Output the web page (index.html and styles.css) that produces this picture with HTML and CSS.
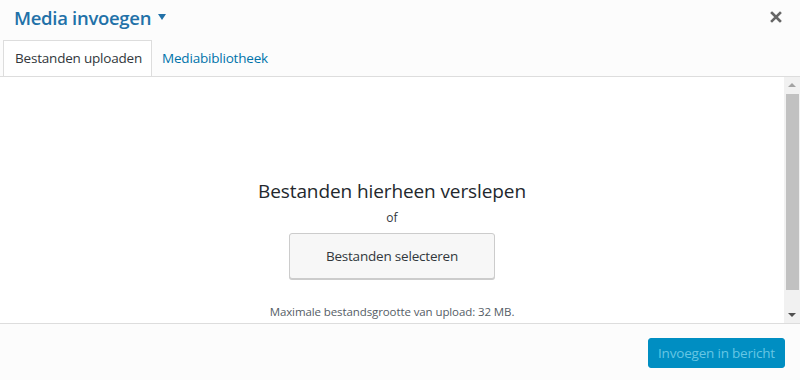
FILE: index.html
```html
<!DOCTYPE html>
<html lang="nl">
<head>
<meta charset="utf-8">
<title>Media invoegen</title>
<link rel="stylesheet" href="styles.css">
</head>
<body>
<div class="modal">
  <header class="head">
    <div class="title-row">
      <h1 class="title">Media invoegen
        <svg class="caret" width="8" height="6" viewBox="0 0 8 6"><path d="M0 0 H8 L4 6 Z" fill="#2271a8"/></svg>
      </h1>
      <button class="close" aria-label="Sluiten">
        <svg width="12" height="12" viewBox="0 0 12 12"><path d="M2 2 L10 10 M10 2 L2 10" stroke="#666" stroke-width="2.6" stroke-linecap="square"/></svg>
      </button>
    </div>
    <nav class="tabs">
      <span class="tab active">Bestanden uploaden</span>
      <span class="tab">Mediabibliotheek</span>
    </nav>
  </header>
  <main class="body">
    <section class="content">
      <div class="drop">
        <p class="drop-title">Bestanden hierheen verslepen</p>
        <p class="or">of</p>
        <button class="select">Bestanden selecteren</button>
        <p class="max">Maximale bestandsgrootte van upload: 32 MB.</p>
      </div>
    </section>
    <div class="scrollbar">
      <div class="arrow up"></div>
      <div class="thumb"></div>
      <div class="track"></div>
      <div class="arrow down"></div>
    </div>
  </main>
  <footer class="foot">
    <button class="insert">Invoegen in bericht</button>
  </footer>
</div>
</body>
</html>
```
FILE: styles.css
```css
* { box-sizing: border-box; }
html, body { margin: 0; padding: 0; }
body {
  width: 800px;
  height: 380px;
  overflow: hidden;
  font-family: "Open Sans", "Noto Sans", sans-serif;
  color: #32373c;
  background: #fff;
}
.modal {
  display: flex;
  flex-direction: column;
  height: 380px;
}
.head {
  background: #fcfcfc;
  border-bottom: 1px solid #ddd;
  height: 77px;
  display: flex;
  flex-direction: column;
}
.title-row {
  display: flex;
  justify-content: space-between;
  align-items: center;
  height: 41px;
  padding: 0 18px 0 14px;
}
.title {
  margin: 0;
  font-size: 18.5px;
  font-weight: 600;
  color: #2271a8;
  letter-spacing: -0.3px;
  line-height: 1;
  padding-bottom: 4px;
  display: flex;
  align-items: center;
}
.caret {
  margin-left: 7px;
  margin-top: -2px;
}
.close {
  border: 0;
  background: transparent;
  padding: 0;
  width: 12px;
  height: 12px;
  margin-bottom: 6px;
  display: flex;
}
.tabs {
  display: flex;
  padding-left: 3px;
  height: 36px;
}
.tab {
  font-size: 13.5px;
  color: #0073aa;
  padding: 0 10px 0 11px;
  line-height: 34px;
  border: 1px solid transparent;
  border-bottom: 0;
  letter-spacing: -0.2px;
}
.tab.active {
  color: #32373c;
  background: #fff;
  border-color: #ddd;
  height: 36px;
  padding-right: 9px;
}
.tab + .tab { padding-left: 9px; }
.body {
  flex: 1;
  display: flex;
  background: #fff;
  border-bottom: 1px solid #ddd;
}
.content {
  flex: 1;
  display: flex;
  justify-content: center;
}
.drop {
  display: flex;
  flex-direction: column;
  align-items: center;
  padding-top: 101px;
}
.drop-title {
  margin: 0;
  font-size: 19px;
  line-height: 26px;
  color: #23282d;
  letter-spacing: -0.1px;
}
.or {
  margin: 5px 0 0;
  font-size: 12px;
  line-height: 18px;
  color: #32373c;
}
.select {
  margin-top: 6px;
  width: 206px;
  height: 46px;
  background: #f7f7f7;
  border: 1px solid #ccc;
  border-radius: 3px;
  box-shadow: 0 1px 0 #ccc;
  font-family: inherit;
  font-size: 13.5px;
  color: #32373c;
  letter-spacing: -0.2px;
  padding: 0;
}
.max {
  margin: 25px 0 0;
  font-size: 11.5px;
  color: #555d66;
  letter-spacing: -0.1px;
}
.scrollbar {
  width: 16px;
  background: #f1f1f1;
  display: flex;
  flex-direction: column;
  align-items: center;
}
.arrow {
  height: 17px;
  width: 16px;
  position: relative;
}
.arrow::after {
  content: "";
  position: absolute;
  left: 4px;
  border-left: 4px solid transparent;
  border-right: 4px solid transparent;
}
.arrow.up::after {
  top: 6px;
  border-bottom: 4px solid #a3a3a3;
}
.arrow.down::after {
  top: 7px;
  border-top: 4px solid #505050;
}
.thumb {
  width: 13px;
  margin-left: 1px;
  height: 196px;
  background: #c1c1c1;
}
.track { flex: 1; }
.foot {
  background: #fcfcfc;
  height: 56px;
  display: flex;
  justify-content: flex-end;
  align-items: center;
  padding-right: 15px;
}
.insert {
  width: 137px;
  height: 30px;
  margin-top: 2px;
  background: #008ec2;
  border: 1px solid #008ec2;
  border-radius: 3px;
  color: #66c6e4;
  font-family: inherit;
  font-size: 13.5px;
  letter-spacing: -0.2px;
  padding: 0;
}
```
